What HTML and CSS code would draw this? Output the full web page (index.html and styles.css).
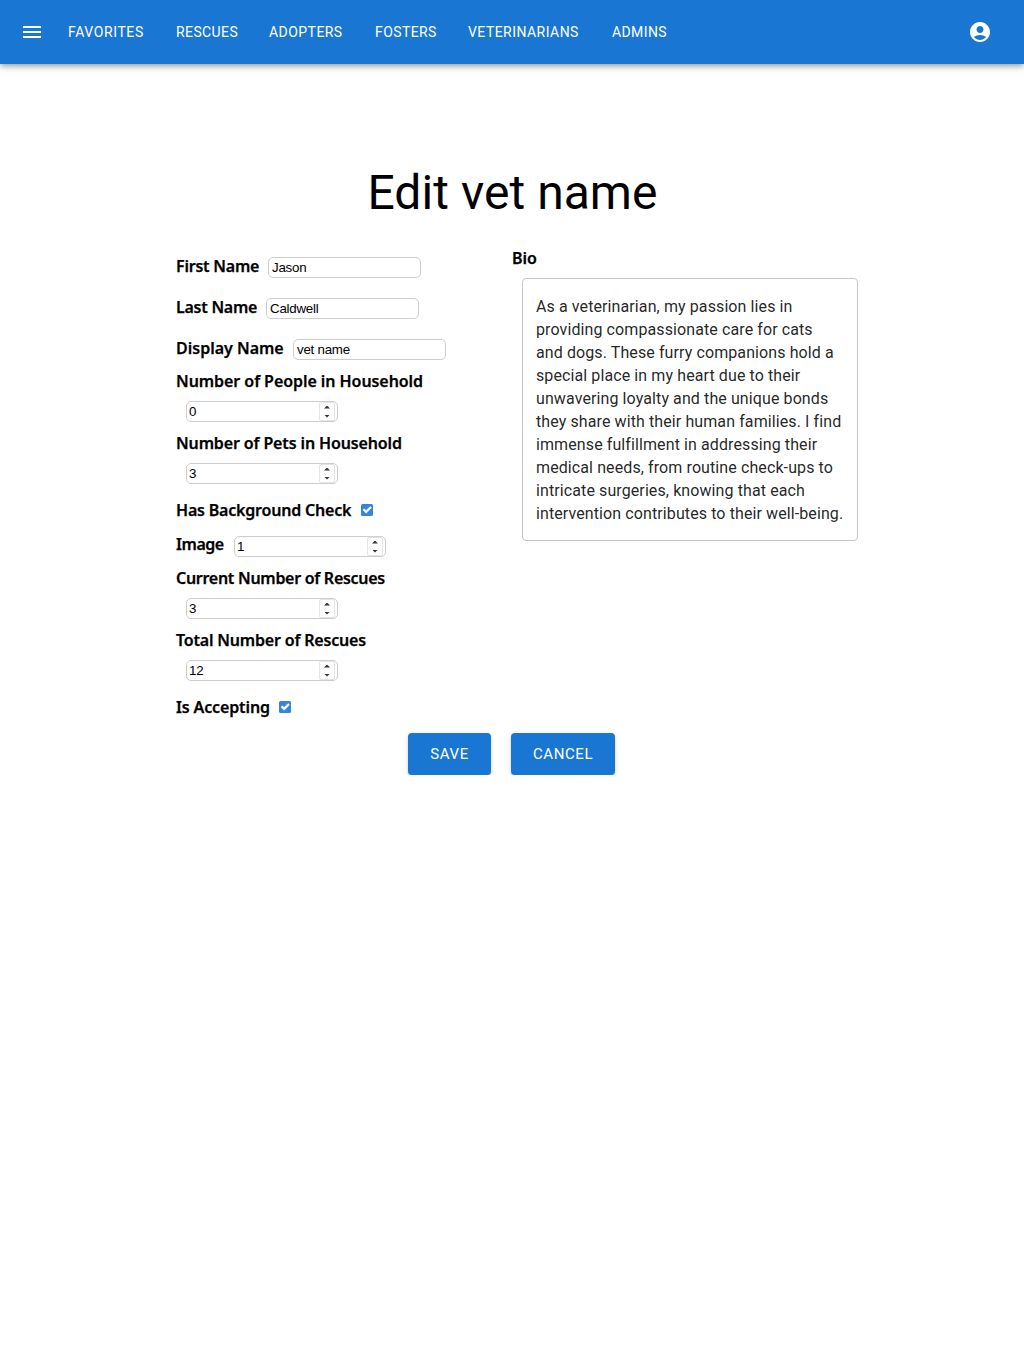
FILE: index.html
```html
<!DOCTYPE html>
<html lang="en">
<head>
<meta charset="utf-8">
<title>Edit vet name</title>
<link rel="stylesheet" href="styles.css">
</head>
<body>
<header class="appbar">
  <svg class="menu-icon" viewBox="0 0 24 24"><path d="M3 18h18v-2H3v2zm0-5h18v-2H3v2zm0-7v2h18V6H3z"/></svg>
  <nav class="nav">
    <a class="nav-favorites">FAVORITES</a>
    <a class="nav-rescues">RESCUES</a>
    <a class="nav-adopters">ADOPTERS</a>
    <a class="nav-fosters">FOSTERS</a>
    <a class="nav-vets">VETERINARIANS</a>
    <a>ADMINS</a>
  </nav>
  <svg class="account-icon" viewBox="0 0 24 24"><path d="M12 2C6.48 2 2 6.48 2 12s4.48 10 10 10 10-4.48 10-10S17.52 2 12 2zm0 4c1.93 0 3.5 1.57 3.5 3.5S13.93 13 12 13s-3.500-1.570-3.500-3.500S10.070 6 12 6zm0 14c-2.030 0-4.430-.82-6.140-2.880C7.550 15.800 9.680 15 12 15s4.450.8 6.140 2.120C16.430 19.180 14.030 20 12 20z"/></svg>
</header>
<main class="page">
  <h1 class="title">Edit vet name</h1>
  <div class="columns">
    <form class="fields">
      <div class="row"><label class="label first">First Name</label><div class="input">Jason</div></div>
      <div class="row"><label class="label last">Last Name</label><div class="input">Caldwell</div></div>
      <div class="row"><label class="label display">Display Name</label><div class="input">vet name</div></div>
      <div class="stack"><label class="label people">Number of People in Household</label><div class="input number">0<span class="spin"><i class="up"></i><i class="down"></i></span></div></div>
      <div class="stack"><label class="label pets">Number of Pets in Household</label><div class="input number">3<span class="spin"><i class="up"></i><i class="down"></i></span></div></div>
      <div class="row check"><label class="label background">Has Background Check</label><svg class="box" viewBox="0 0 12 12"><rect width="12" height="12" rx="1.500"/><path d="M2.500 5.300L5.100 7.900L10 3"/></svg></div>
      <div class="row image-row"><label class="label image">Image</label><div class="input number">1<span class="spin"><i class="up"></i><i class="down"></i></span></div></div>
      <div class="stack"><label class="label current">Current Number of Rescues</label><div class="input number">3<span class="spin"><i class="up"></i><i class="down"></i></span></div></div>
      <div class="stack"><label class="label total">Total Number of Rescues</label><div class="input number">12<span class="spin"><i class="up"></i><i class="down"></i></span></div></div>
      <div class="row check"><label class="label accepting">Is Accepting</label><svg class="box" viewBox="0 0 12 12"><rect width="12" height="12" rx="1.500"/><path d="M2.500 5.300L5.100 7.900L10 3"/></svg></div>
    </form>
    <section class="bio">
      <label class="label">Bio</label>
      <div class="bio-text">As a veterinarian, my passion lies in<br>providing compassionate care for cats<br>and dogs. These furry companions hold a<br>special place in my heart due to their<br>unwavering loyalty and the unique bonds<br>they share with their human families. I find<br>immense fulfillment in addressing their<br>medical needs, from routine check-ups to<br>intricate surgeries, knowing that each<br>intervention contributes to their well-being.</div>
    </section>
  </div>
  <div class="actions">
    <button class="btn save">SAVE</button>
    <button class="btn cancel">CANCEL</button>
  </div>
</main>
</body>
</html>
```
FILE: styles.css
```css
* { box-sizing: border-box; }
body { margin: 0; background: #fff; color: #000; font-family: Roboto, sans-serif; }
.appbar { height: 64px; display: flex; align-items: center; padding: 0 32px 0 20px; background: #1976d2; box-shadow: 0 2px 4px -1px rgba(0,0,0,.2), 0 4px 5px rgba(0,0,0,.14), 0 1px 10px rgba(0,0,0,.12); }
.menu-icon, .account-icon { width: 24px; height: 24px; fill: #fff; flex: none; }
.nav { display: flex; flex: 1; margin-left: 24px; color: #fff; font-size: 14px; line-height: 24px; letter-spacing: .4px; white-space: nowrap; }
.nav-favorites { width: 108px; letter-spacing: .6px; }
.nav-rescues { width: 93px; }
.nav-adopters { width: 106px; letter-spacing: .45px; }
.nav-fosters { width: 93px; }
.nav-vets { width: 144px; letter-spacing: .45px; }
.page { padding: 101px 166px 0 176px; }
.title { margin: 0 9px 0 0; height: 56px; line-height: 56px; font-size: 48px; font-weight: 400; letter-spacing: .05px; text-align: center; white-space: nowrap; }
.columns { display: flex; padding-top: 26px; }
.fields { width: 336px; }
.label { font: 600 16px/22px "Noto Sans", sans-serif; -webkit-text-stroke: .25px #000; white-space: nowrap; }
.row { height: 41px; display: flex; align-items: center; }
.row .label { margin: -3px 10px 0 0; }
.row.check { height: 32px; }
.row.check .label { margin-top: 0; }
.row .first { width: 82px; letter-spacing: -.22px; }
.row .last { width: 80px; letter-spacing: -.25px; }
.row .display { width: 107px; }
.people { letter-spacing: -.06px; }
.pets { letter-spacing: -.13px; }
.row .background { width: 175px; letter-spacing: -.2px; }
.row .image { width: 48px; margin-top: -5px; letter-spacing: -.45px; }
.current { letter-spacing: -.28px; }
.total { letter-spacing: -.18px; }
.row .accepting { width: 93px; letter-spacing: -.13px; }
.stack { height: 62px; display: flex; flex-direction: column; }
.stack .input { margin: 9px 0 0 10px; }
.input { width: 153px; height: 21px; border: 1px solid #cdcdcd; border-radius: 5px; padding: 0 3px; font: 13.333px/19px "Liberation Sans", sans-serif; letter-spacing: -.25px; background: #fff; flex: none; }
.input.number { width: 152px; display: flex; justify-content: space-between; padding: 0 2px; }
.spin { width: 16px; border: 1px solid #e4e4e4; display: flex; flex-direction: column; align-items: center; justify-content: center; gap: 6px; border-radius: 2px; }
.up, .down { width: 6px; height: 3px; background: #2e3436; }
.up { clip-path: polygon(50% 0, 100% 100%, 0 100%); }
.down { clip-path: polygon(0 0, 100% 0, 50% 100%); }
.box { width: 12px; height: 12px; }
.box rect { fill: #3584e4; }
.box path { fill: none; stroke: #fff; stroke-width: 2.3; }
.bio { width: 346px; }
.bio .label { display: block; line-height: 22px; }
.bio-text { margin: 9px 0 0 10px; height: 263px; width: 336px; border: 1px solid #c4c4c4; border-radius: 4px; padding: 16px 13px; color: rgba(0,0,0,.87); font-size: 16px; line-height: 23px; letter-spacing: .1px; white-space: nowrap; }
.actions { display: flex; justify-content: center; gap: 20px; padding-right: 10.5px; margin-top: 10px; }
.btn { height: 42px; border: 0; border-radius: 4px; padding: 0; color: #fff; background: #1976d2; font: 15px/26px Roboto, sans-serif; letter-spacing: .6px; box-shadow: 0 3px 1px -2px rgba(0,0,0,.2), 0 2px 2px rgba(0,0,0,.14), 0 1px 5px rgba(0,0,0,.12); }
.save { width: 82.5px; }
.cancel { width: 104.5px; }
```
